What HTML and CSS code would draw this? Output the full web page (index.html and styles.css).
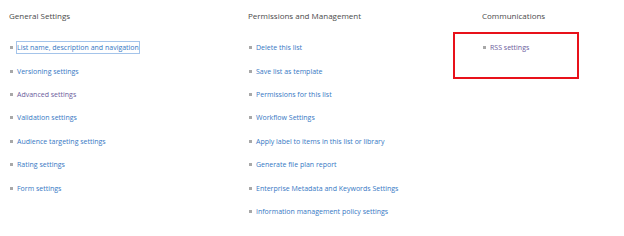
FILE: index.html
```html
<!DOCTYPE html>
<html lang="en">
<head>
  <meta charset="UTF-8">
  <title>List Settings</title>
  <link rel="stylesheet" href="styles.css">
</head>
<body>
  <div class="settings">
    <!-- general -->
    <div class="group">
      <h3 class="group_title">General Settings</h3>
      <ul class="links">
        <li><a href="#" class="focused">List name, description and navigation</a></li>
        <li><a href="#">Versioning settings</a></li>
        <li><a href="#" class="visited">Advanced settings</a></li>
        <li><a href="#">Validation settings</a></li>
        <li><a href="#">Audience targeting settings</a></li>
        <li><a href="#">Rating settings</a></li>
        <li><a href="#">Form settings</a></li>
      </ul>
    </div>

    <!-- permissions -->
    <div class="group">
      <h3 class="group_title">Permissions and Management</h3>
      <ul class="links">
        <li><a href="#">Delete this list</a></li>
        <li><a href="#">Save list as template</a></li>
        <li><a href="#">Permissions for this list</a></li>
        <li><a href="#">Workflow Settings</a></li>
        <li><a href="#">Apply label to items in this list or library</a></li>
        <li><a href="#">Generate file plan report</a></li>
        <li><a href="#">Enterprise Metadata and Keywords Settings</a></li>
        <li><a href="#">Information management policy settings</a></li>
      </ul>
    </div>

    <!-- communications -->
    <div class="group comms">
      <h3 class="group_title">Communications</h3>
      <ul class="links">
        <li><a href="#" class="visited">RSS settings</a></li>
      </ul>
      <div class="highlight"></div>
    </div>
  </div>
</body>
</html>
```

FILE: styles.css
```css
* {
  box-sizing: border-box;
  margin: 0;
  padding: 0;
}
body {
  background: #fff;
  font-family: "Open Sans", "Liberation Sans", sans-serif;
  color: #444;
}
.settings {
  display: grid;
  grid-template-columns: 239px 234px 1fr;
  padding: 10px 0 0 9px;
}
.group {
  position: relative;
}
.group_title {
  font-size: 8px;
  font-weight: normal;
  line-height: 12px;
  color: #4a4a4a;
}
.links {
  list-style: none;
  margin-top: 14px;
}
.links li {
  display: flex;
  align-items: center;
  gap: 4px;
  height: 23.4px;
  padding-left: 1px;
  font-size: 7px;
}
.links li::before {
  content: "";
  width: 3px;
  height: 3px;
  background: #a8a8a8;
}
.links a {
  color: #3678c4;
  text-decoration: none;
  line-height: 11px;
}
.links a.visited {
  color: #6b5c9c;
}
.links a.focused {
  outline: 1px solid #a4c4ea;
  outline-offset: 0;
}
.highlight {
  position: absolute;
  left: -29px;
  top: 22px;
  width: 126px;
  height: 47px;
  border: 2px solid #e8111a;
}
```
